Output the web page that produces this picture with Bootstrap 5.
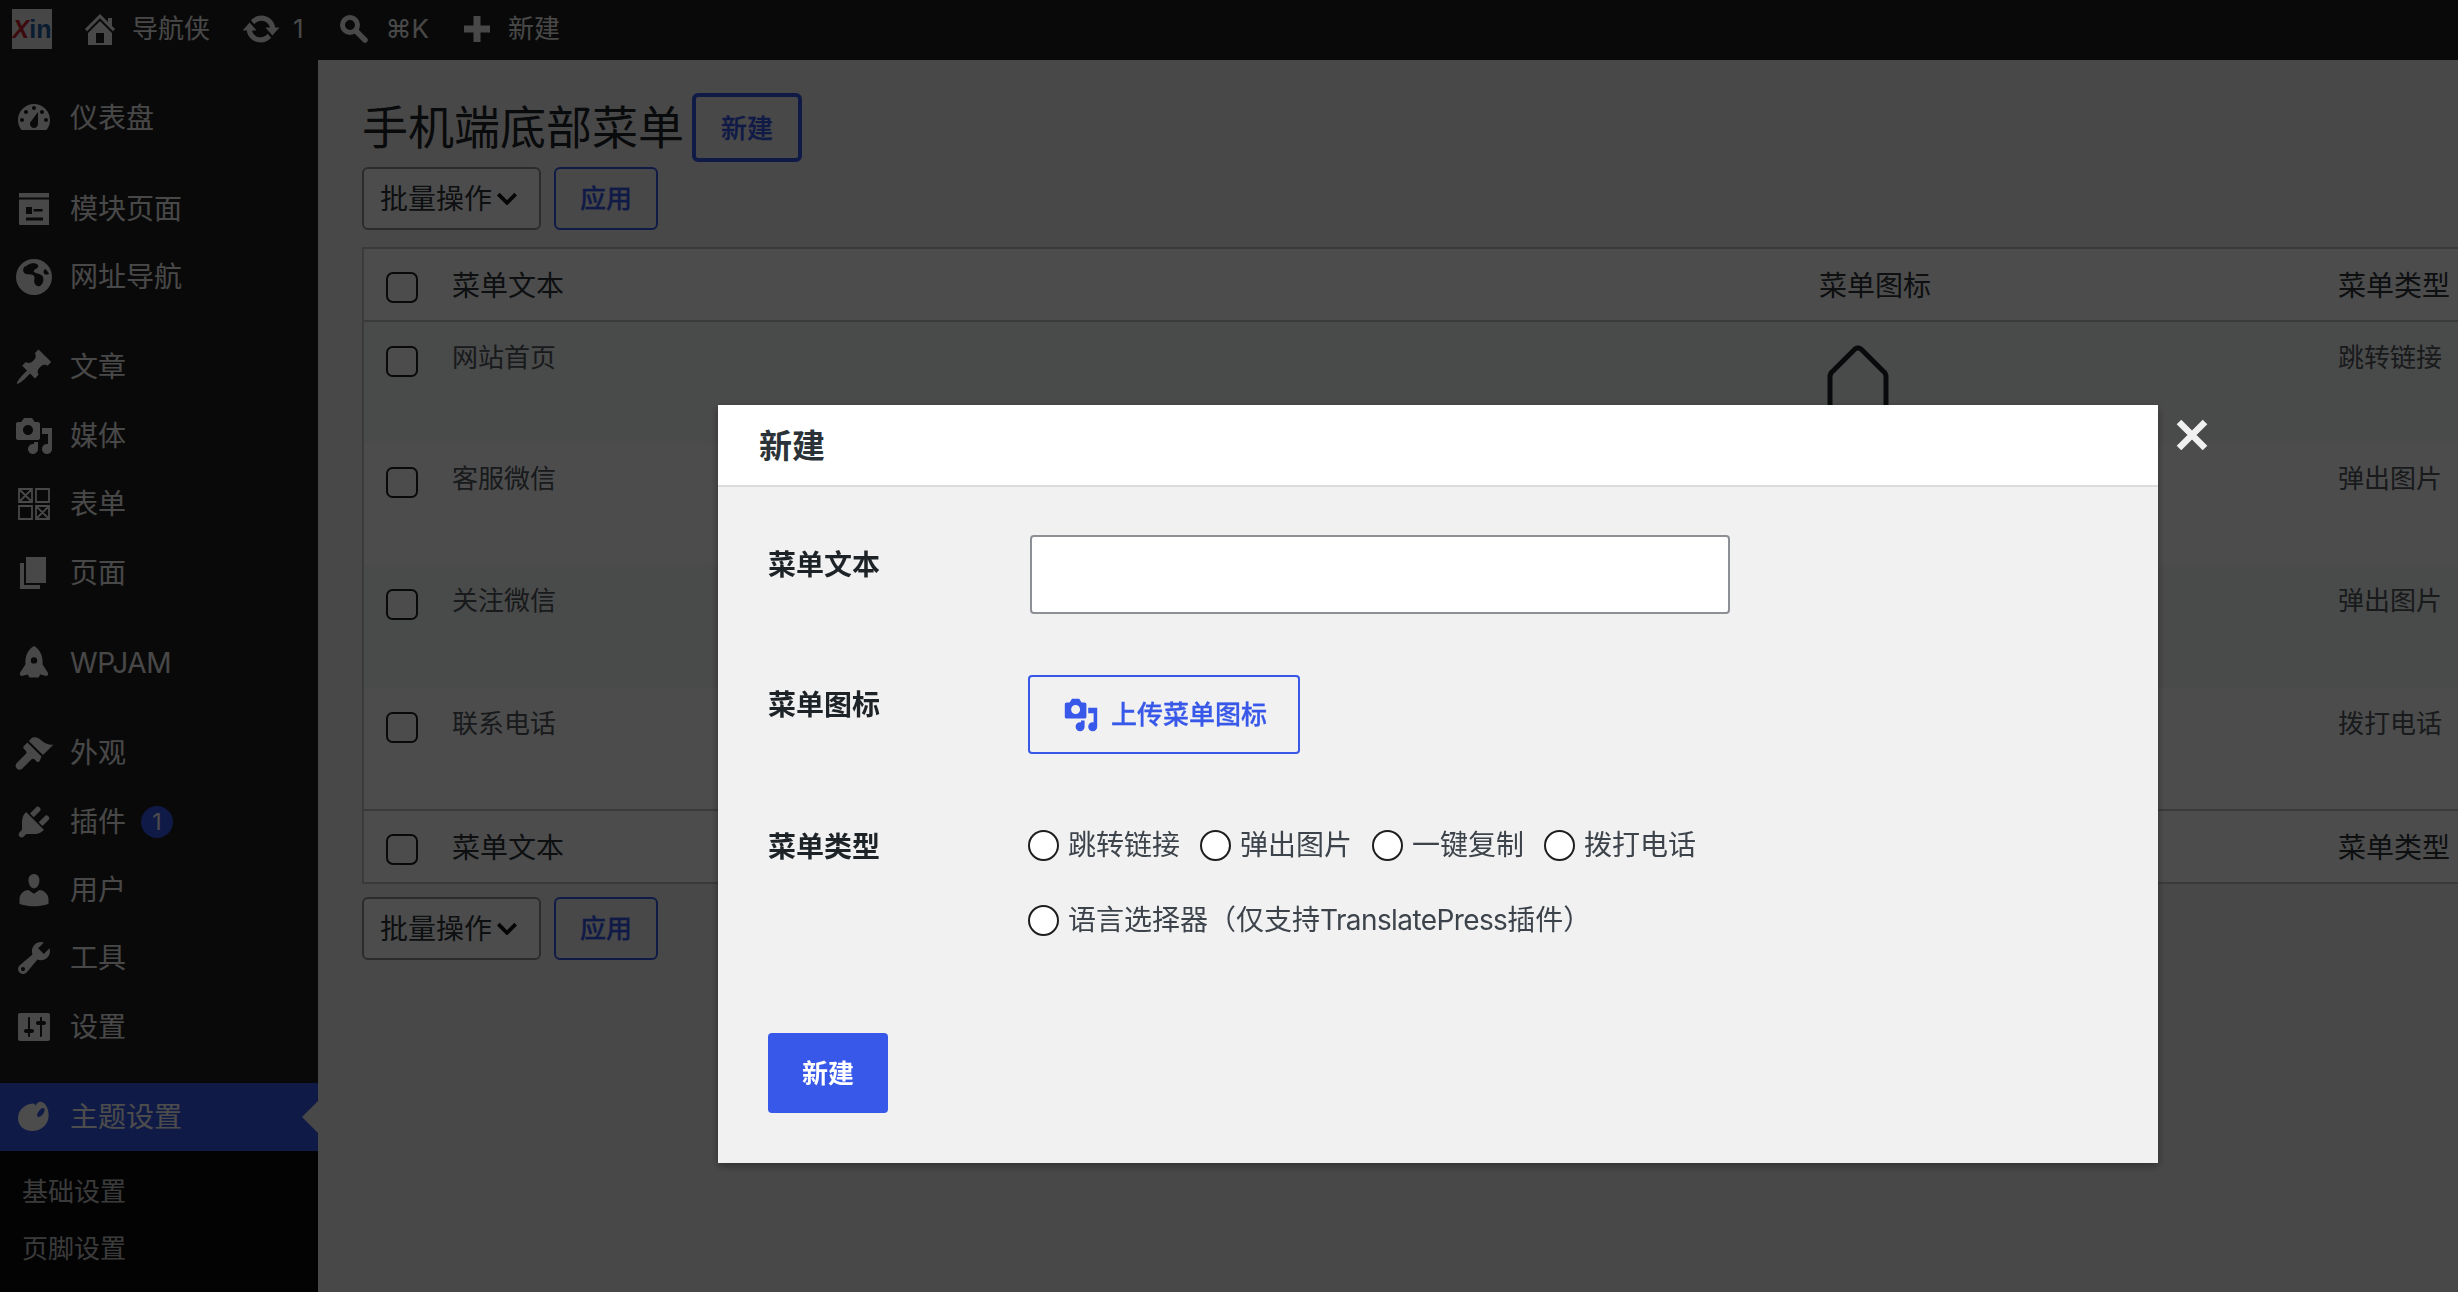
<!DOCTYPE html>
<html lang="zh-CN">
<head>
    <meta charset="UTF-8">
    <title>手机端底部菜单</title>
    <link href="https://cdn.jsdelivr.net/npm/bootstrap@5.3.0/dist/css/bootstrap.min.css" rel="stylesheet">
    <style>
        html, body { height: 100%; overflow: hidden; }
        body {
            font-family: Inter, "Noto Sans CJK SC", "DejaVu Sans", sans-serif;
            font-size: 26px;
            color: #2c3338;
            background: #f0f0f1;
        }
        svg.dash { fill: currentColor; fill-rule: evenodd; flex: none; }

        /* top bar */
        .admin-bar { height: 60px; flex: none; padding-bottom: 3px; background: #1e1e1e; color: #f0f0f1; white-space: nowrap; }
        .xin-logo {
            width: 40px; height: 40px; margin-left: 12px; background: #ececec;
            font: bold 25px/40px "Liberation Sans", sans-serif; text-align: center; color: #1f5fa6;
        }
        .xin-logo span { color: #c8202c; font-style: italic; }
        .bar-home { margin-left: 28px; }
        .bar-label-home { margin-left: 12px; }
        .bar-sync { margin-left: 31px; }
        .bar-count { margin-left: 12px; }
        .bar-search { margin-left: 35px; }
        .bar-key { margin-left: 17px; }
        .bar-plus { margin-left: 35px; }
        .bar-label-new { margin-left: 18px; }

        /* side menu */
        .side-menu { width: 318px; flex: none; background: #1e1e1e; color: #f0f0f1; padding-top: 24px; }
        .side-item { height: 68.4px; padding-left: 14px; font-size: 28px; position: relative; }
        .side-item svg { margin-right: 16px; }
        .side-latin { letter-spacing: -.3px; }
        .side-gap { height: 22px; }
        .side-item.current { background: #3858e9; color: #fff; }
        .side-item.current::after {
            content: ""; position: absolute; right: 0; top: 18px;
            border: 16px solid transparent; border-right-color: #f0f0f1; border-left-width: 0;
        }
        .side-badge {
            width: 32px; height: 32px; margin-left: 15px; border-radius: 50%;
            background: #3858e9; color: #fff; font-size: 23px; line-height: 32px; text-align: center;
        }
        .side-sub { background: #0c0c0c; padding-top: 13px; height: 400px; }
        .side-sub div { height: 56.5px; line-height: 56.5px; padding-left: 22px; font-size: 26px; color: #c3c4c7; }

        /* main list */
        .list-area { padding: 33px 0 0 44px; min-width: 0; overflow: hidden; }
        .list-title { font-size: 46px; font-weight: 400; line-height: 69px; margin: 0; color: #1d2327; }
        .title-new {
            width: 110px; height: 69px; margin-left: 8px; padding: 2px 0 0;
            border: 4px solid #3858e9; border-radius: 6px; color: #3858e9;
            font-size: 26px; font-weight: 500; -webkit-text-stroke: .3px currentColor;
        }
        .bulk-top { margin-top: 5px; }
        .bulk-select {
            width: 179px; height: 63px; padding: 0 0 0 16px; font-size: 28px; color: #2c3338;
            border: 2px solid #8c8f94; border-radius: 6px; background-color: #fff;
            background-image: url("data:image/svg+xml,%3csvg xmlns='http://www.w3.org/2000/svg' viewBox='0 0 20 12'%3e%3cpath fill='none' stroke='%23111' stroke-width='3.5' d='M2 2l8 8 8-8'/%3e%3c/svg%3e");
            background-position: right 21px center; background-size: 22px 13px;
        }
        .bulk-apply {
            width: 104px; height: 63px; margin-left: 13px; padding: 0;
            border: 2px solid #3858e9; border-radius: 6px; color: #3858e9;
            font-size: 26px; font-weight: 500; -webkit-text-stroke: .3px currentColor;
        }
        .menu-table {
            table-layout: fixed; width: 2300px; margin: 17px 0 13px; font-size: 26px;
            border: 2px solid #c3c4c7; --bs-table-bg: #fff; --bs-table-color: #50575e;
        }
        .menu-table th, .menu-table td { padding: 16px 0 0 20px; border: 0; }
        .menu-table thead th, .menu-table tfoot th {
            font-size: 28px; font-weight: 400; color: #2c3338; padding-top: 2px; vertical-align: middle;
        }
        .menu-table thead th { height: 73px; border-bottom: 2px solid #c3c4c7; }
        .menu-table tfoot th { height: 73.5px; border-top: 2px solid #c3c4c7; }
        .menu-table tbody td { height: 122.2px; vertical-align: top; }
        .menu-table tbody tr.stripe td { background: #f6f7f7; }
        .col-check { width: 69px; }
        .col-text { width: 1367px; }
        .col-icon { width: 519px; }
        .menu-check {
            width: 32px; height: 31px; margin: 4px 0 0 2px; float: none; display: block;
            border: 2px solid #1e1e1e; border-radius: 4px; background-color: #fff;
        }
        .menu-table tbody .menu-check { margin-top: 8px; }
        .home-glyph { display: block; margin: 6px 0 0 8px; color: #1d2327; }

        /* dialog */
        .modal-backdrop { --bs-backdrop-opacity: .7; }
        .add-dialog { max-width: none; width: 1440px; margin: 405px 0 0 718px; }
        .add-dialog .modal-content {
            border: 0; border-radius: 0; background: #f1f1f2; box-shadow: 0 3px 8px rgba(0,0,0,.35);
        }
        .add-head { height: 82px; background: #fff; border-bottom: 2px solid #dcdcde; border-radius: 0; padding: 3px 0 0 41px; }
        .add-head .modal-title { font-size: 33px; font-weight: 600; color: #2c3338; }
        .add-close {
            position: absolute; left: 1458px; top: 14px; padding: 0; border: 0; background: none; line-height: 0;
        }
        .add-body { padding: 48px 0 50px 50px; }
        .field-row { display: flex; }
        .upload-row { margin-top: 61px; }
        .field-label { width: 260px; flex: none; font-size: 28px; font-weight: 700; color: #1d2327; padding-top: 9px; line-height: 42px; }
        .text-field {
            width: 700px; height: 79px; margin-left: 2px; border: 2px solid #8c8f94; border-radius: 4px; background: #fff;
        }
        .upload-btn {
            width: 272px; height: 79px; padding: 0 0 0 33px; border: 2px solid #3858e9; border-radius: 4px;
            color: #3858e9; font-size: 26px; font-weight: 500; gap: 12px; -webkit-text-stroke: .3px currentColor;
        }
        .type-row { margin-top: 70px; }
        .type-row .field-label { padding-top: 2px; }
        .type-options { width: 700px; column-gap: 20px; row-gap: 33px; font-size: 28px; line-height: 42px; color: #3c434a; }
        .type-latin { letter-spacing: -.6px; }
        .type-radio {
            width: 31px; height: 31px; margin: 0 9px 0 0; float: none; flex: none;
            border: 2px solid #1e1e1e; background-color: #fff;
        }
        .add-submit {
            width: 120px; height: 80px; margin-top: 92px; padding: 0; border: 0; border-radius: 4px;
            background: #3858e9; color: #fff; font-size: 26px; font-weight: 700;
        }
    </style>
</head>
<body>
    <div class="d-flex flex-column h-100">
        <header class="admin-bar d-flex align-items-center">
            <div class="xin-logo"><span>X</span>in</div>
            <svg class="dash bar-home" width="40" height="40" viewBox="0 0 20 20"><path d="M16 8.5l1.53 1.53-1.06 1.06L10 4.62l-6.47 6.47-1.06-1.06L10 2.5l4 4v-2h2v4zm-6-2.46l6 5.99V18H4v-5.97zM12 17v-5H8v5h4z"/></svg>
            <span class="bar-label-home">导航侠</span>
            <svg class="dash bar-sync" width="40" height="40" viewBox="0 0 20 20"><path d="M10.2 3.28c3.53 0 6.43 2.61 6.92 6h2.08l-3.5 4-3.5-4h2.32c-.45-1.97-2.21-3.45-4.32-3.45-1.45 0-2.73.71-3.54 1.78L4.95 5.66C6.23 4.2 8.11 3.28 10.2 3.28zm-.4 13.44c-3.52 0-6.43-2.61-6.92-6H.8l3.5-4c1.17 1.33 2.33 2.67 3.5 4H5.48c.45 1.97 2.21 3.45 4.32 3.45 1.45 0 2.73-.71 3.54-1.78l1.71 1.95c-1.28 1.46-3.15 2.38-5.25 2.38z"/></svg>
            <span class="bar-count">1</span>
            <svg class="bar-search" width="30" height="30" viewBox="0 0 30 30" fill="none" stroke="currentColor"><circle cx="11" cy="11" r="7.5" stroke-width="5"/><path d="M17 17l9 9" stroke-width="5.5" stroke-linecap="round"/></svg>
            <span class="bar-key">⌘K</span>
            <svg class="dash bar-plus" width="26" height="26" viewBox="0 0 26 26"><path d="M9.500 0h7v9.500H26v7h-9.500V26h-7v-9.500H0v-7h9.500z"/></svg>
            <span class="bar-label-new">新建</span>
        </header>

        <div class="d-flex flex-grow-1 overflow-hidden">
            <nav class="side-menu">
                <div class="side-item d-flex align-items-center"><svg class="dash" width="40" height="40" viewBox="0 0 20 20"><path d="M3.76 16h12.48c1.1-1.37 1.76-3.11 1.76-5 0-4.42-3.58-8-8-8s-8 3.58-8 8c0 1.89.66 3.63 1.76 5zM10 4c.55 0 1 .45 1 1s-.45 1-1 1-1-.45-1-1 .45-1 1-1zM6 6c.55 0 1 .45 1 1s-.45 1-1 1-1-.45-1-1 .45-1 1-1zm8 0c.55 0 1 .45 1 1s-.45 1-1 1-1-.45-1-1 .45-1 1-1zM4 10c.55 0 1 .45 1 1s-.45 1-1 1-1-.45-1-1 .45-1 1-1zm12 0c.55 0 1 .45 1 1s-.45 1-1 1-1-.45-1-1 .45-1 1-1zM8.630 11.550L12 7v6c0 1.100-.9 2-2 2s-2-.9-2-2c0-.57.24-1.080.63-1.450z"/></svg>仪表盘</div>
                <div class="side-gap"></div>
                <div class="side-item d-flex align-items-center"><svg class="dash" width="40" height="40" viewBox="0 0 20 20"><path d="M2.500 2h15v2.200h-15zM3 5.200h14.500V18H3a.5.5 0 0 1-.5-.5V5.200zM6 9v3.500h3V9zm3.800 1v1.200h4.500V10zM6 14.300v1.400h8.500v-1.400z"/></svg>模块页面</div>
                <div class="side-item d-flex align-items-center"><svg class="dash" width="40" height="40" viewBox="0 0 20 20"><path d="M10 1a9 9 0 1 1 0 18 9 9 0 0 1 0-18zM5.500 4.500C4 6 4.500 8 6 8.500c1.500.4 3-.2 4 1 .8 1-.5 2.500.5 4 .5.800 1.700 1.500 2.500 1 1.500-1 2-3 1.500-4.500-.5-1.300-2.500-1.500-4-2.200-1-.5-.6-1.300.3-1.800 1-.5 1.700-1.200 1.200-2-.6-1-2.500-1-3.500-.8-1 .2-2 .8-3 1.800zM15.500 6c-.8.5-1 1.800-.3 2.500.5.400 1.800.3 2.300 0-.3-1-1-2-2-2.500z"/></svg>网址导航</div>
                <div class="side-gap"></div>
                <div class="side-item d-flex align-items-center"><svg class="dash" width="40" height="40" viewBox="0 0 20 20"><path d="M10.440 3.020l1.820-1.820 6.360 6.350-1.830 1.820c-1.050-.68-2.480-.57-3.410.36l-.75.75c-.92.93-1.040 2.350-.35 3.410l-1.830 1.820-2.410-2.410-2.800 2.790c-.42.42-3.380 2.710-3.800 2.290s1.860-3.390 2.280-3.810l2.790-2.790L4.100 9.360l1.830-1.820c1.050.69 2.480.57 3.400-.36l.75-.75c.93-.92 1.050-2.350.36-3.410z"/></svg>文章</div>
                <div class="side-item d-flex align-items-center"><svg class="dash" width="40" height="40" viewBox="0 0 20 20"><path d="M13 11V4c0-.55-.45-1-1-1h-1.670L9 1H5L3.670 3H2c-.55 0-1 .45-1 1v7c0 .55.45 1 1 1h10c.55 0 1-.45 1-1zM7 4.500c1.380 0 2.500 1.120 2.500 2.500S8.380 9.500 7 9.500 4.500 8.380 4.500 7 5.620 4.500 7 4.500zM14 6h5v10.500c0 1.380-1.120 2.500-2.500 2.500S14 17.880 14 16.500s1.120-2.500 2.500-2.500c.17 0 .34.02.5.05V9h-3V6zm-4 8.050V13h2v3.500c0 1.380-1.120 2.500-2.500 2.500S7 17.880 7 16.500 8.120 14 9.500 14c.17 0 .34.02.5.05z"/></svg>媒体</div>
                <div class="side-item d-flex align-items-center"><svg width="40" height="40" viewBox="0 0 20 20" fill="none" stroke="currentColor" stroke-width=".9"><path d="M2.500 2.500h6.500V9H2.500zM2.500 2.500L9 9M9 2.500L2.500 9M11 2.500h6.500V9H11zM2.500 11H9v6.500H2.500zM11 11h6.500v6.500H11zM11 11l6.500 6.500M17.500 11L11 17.500"/></svg>表单</div>
                <div class="side-item d-flex align-items-center"><svg class="dash" width="40" height="40" viewBox="0 0 20 20"><path d="M6 15V2h10v13H6zm-1 1h8v2H3V5h2v11z"/></svg>页面</div>
                <div class="side-gap"></div>
                <div class="side-item d-flex align-items-center"><svg class="dash" width="40" height="40" viewBox="0 0 20 20"><path d="M10 1.500c2.700 1.500 4.300 4.500 4.300 7.800v1.500l2.600 4c.5.8.1 1.700-.8 1.700l-3-.7-.8 1.500H7.700l-.8-1.500-3 .7c-.9 0-1.300-.9-.8-1.700l2.600-4V9.300c0-3.300 1.600-6.300 4.300-7.800zM10 7.100a1.600 1.600 0 1 0 0 3.200 1.600 1.600 0 0 0 0-3.200z"/></svg><span class="side-latin">WPJAM</span></div>
                <div class="side-gap"></div>
                <div class="side-item d-flex align-items-center"><svg class="dash" width="40" height="40" viewBox="0 0 20 20"><path d="M14.480 11.060L7.410 3.990l1.500-1.500c.5-.56 2.300-.47 3.510.32 1.210.8 1.430 1.280 2.910 2.100 1.180.64 2.450 1.260 4.450.85zm-.71.71L6.700 4.700 4.930 6.470c-.39.39-.39 1.020 0 1.410l1.060 1.060c.39.39.39 1.030 0 1.420l-4.600 4.600c-.8.8-.8 2 0 2.800s2 .8 2.800 0l4.600-4.600c.39-.39 1.030-.39 1.420 0l1.060 1.060c.39.39 1.020.39 1.410 0z"/></svg>外观</div>
                <div class="side-item d-flex align-items-center"><svg class="dash" width="40" height="40" viewBox="0 0 20 20"><path d="M13.110 4.360L9.870 7.600 8 5.730l3.240-3.240c.35-.34 1.050-.2 1.560.32.52.51.66 1.210.31 1.550zm-8 1.770l.91-1.120 9.010 9.010-1.190.84c-.71.71-2.630 1.160-3.820 1.160H6.140L4.900 17.260c-.59.59-1.540.59-2.120 0-.59-.58-.59-1.530 0-2.120l1.240-1.240v-3.880c0-1.130.4-3.190 1.090-3.890zm7.260 3.970l3.240-3.240c.34-.35 1.040-.21 1.550.31.52.51.66 1.210.31 1.550l-3.240 3.250z"/></svg>插件<span class="side-badge">1</span></div>
                <div class="side-item d-flex align-items-center"><svg class="dash" width="40" height="40" viewBox="0 0 20 20"><path d="M10 9.250c-2.270 0-2.730-3.440-2.730-3.440C7 4.020 7.820 2 9.970 2c2.160 0 2.980 2.020 2.710 3.810 0 0-.41 3.440-2.680 3.440zm0 2.570L12.720 10c2.390 0 4.520 2.330 4.520 4.530v2.490s-3.650 1.130-7.240 1.130c-3.650 0-7.240-1.130-7.240-1.130v-2.490c0-2.250 1.940-4.480 4.470-4.480z"/></svg>用户</div>
                <div class="side-item d-flex align-items-center"><svg class="dash" width="40" height="40" viewBox="0 0 20 20"><path d="M16.680 9.770c-1.340 1.340-3.300 1.670-4.950.99l-5.410 6.520c-.99.99-2.590.99-3.580 0s-.99-2.590 0-3.570l6.520-5.420c-.68-1.650-.35-3.610.99-4.950 1.280-1.280 3.120-1.620 4.720-1.060l-2.890 2.890 2.820 2.820 2.860-2.870c.53 1.580.18 3.390-1.080 4.670zM3.810 16.210c.4.39 1.040.39 1.430 0 .4-.4.4-1.040 0-1.430-.39-.4-1.030-.4-1.430 0-.39.39-.39 1.030 0 1.430z"/></svg>工具</div>
                <div class="side-item d-flex align-items-center"><svg class="dash" width="40" height="40" viewBox="0 0 20 20"><path d="M18 16V4c0-.55-.45-1-1-1H3c-.55 0-1 .45-1 1v12c0 .55.45 1 1 1h14c.55 0 1-.45 1-1zM8 11h1c.55 0 1 .45 1 1s-.45 1-1 1H8v1.500c0 .28-.22.5-.5.5s-.5-.22-.5-.5V13H6c-.55 0-1-.45-1-1s.45-1 1-1h1V5.500c0-.28.22-.5.5-.5s.5.22.5.5V11zm5-2h-1c-.55 0-1-.45-1-1s.45-1 1-1h1V5.500c0-.28.22-.5.5-.5s.5.22.5.5V7h1c.55 0 1 .45 1 1s-.45 1-1 1h-1v5.500c0 .28-.22.5-.5.5s-.5-.22-.5-.5V9z"/></svg>设置</div>
                <div class="side-gap"></div>
                <div class="side-item current d-flex align-items-center"><svg class="dash" width="40" height="40" viewBox="0 0 20 20"><path d="M9.500 3.200C5.500 3.400 2 6.500 2 10.500 2 14.500 5.200 17 9 17c4.500 0 8.300-3.300 8.300-7.800 0-1.500-.2-3.300-1.300-5-.9-1.400-2.400-2-3.400-1.700-.8.200-1.200 1-1.700 1.600-.4.500-.3-.9-1.400-.9zM14.800 5.500c.6.300.7 1.200.2 2.200-.5 1-1.600 2.200-2.600 2.300-.8.100-1-.7-.7-1.600.5-1.300 2-3.300 3.100-2.900z"/></svg>主题设置</div>
                <div class="side-sub">
                    <div>基础设置</div>
                    <div>页脚设置</div>
                </div>
            </nav>

            <main class="list-area flex-grow-1">
                <div class="d-flex align-items-center">
                    <h1 class="list-title">手机端底部菜单</h1>
                    <button class="btn title-new" type="button">新建</button>
                </div>
                <div class="d-flex bulk-top">
                    <select class="form-select bulk-select"><option>批量操作</option></select>
                    <button class="btn bulk-apply" type="button">应用</button>
                </div>
                <table class="table menu-table">
                    <colgroup><col class="col-check"><col class="col-text"><col class="col-icon"><col></colgroup>
                    <thead>
                        <tr>
                            <th><input class="form-check-input menu-check" type="checkbox"></th>
                            <th>菜单文本</th>
                            <th>菜单图标</th>
                            <th>菜单类型</th>
                        </tr>
                    </thead>
                    <tbody>
                        <tr class="stripe">
                            <td><input class="form-check-input menu-check" type="checkbox"></td>
                            <td>网站首页</td>
                            <td><svg class="home-glyph" width="62" height="70" viewBox="0 0 62 70" fill="none" stroke="currentColor" stroke-width="5" stroke-linejoin="round"><path d="M3 33q0-4 3-6L28 5q3-2 6 0l22 22q3 2 3 6v27a6 6 0 0 1-6 6H9a6 6 0 0 1-6-6z"/></svg></td>
                            <td>跳转链接</td>
                        </tr>
                        <tr>
                            <td><input class="form-check-input menu-check" type="checkbox"></td>
                            <td>客服微信</td>
                            <td></td>
                            <td>弹出图片</td>
                        </tr>
                        <tr class="stripe">
                            <td><input class="form-check-input menu-check" type="checkbox"></td>
                            <td>关注微信</td>
                            <td></td>
                            <td>弹出图片</td>
                        </tr>
                        <tr>
                            <td><input class="form-check-input menu-check" type="checkbox"></td>
                            <td>联系电话</td>
                            <td></td>
                            <td>拨打电话</td>
                        </tr>
                    </tbody>
                    <tfoot>
                        <tr>
                            <th><input class="form-check-input menu-check" type="checkbox"></th>
                            <th>菜单文本</th>
                            <th>菜单图标</th>
                            <th>菜单类型</th>
                        </tr>
                    </tfoot>
                </table>
                <div class="d-flex">
                    <select class="form-select bulk-select"><option>批量操作</option></select>
                    <button class="btn bulk-apply" type="button">应用</button>
                </div>
            </main>
        </div>
    </div>

    <div class="modal-backdrop show"></div>
    <div class="modal d-block" tabindex="-1">
        <div class="modal-dialog add-dialog">
            <div class="modal-content">
                <button class="add-close" type="button" aria-label="关闭">
                    <svg width="32" height="32" viewBox="0 0 32 32" fill="none" stroke="#f0f0f1" stroke-width="6.500"><path d="M3 3l26 26M29 3L3 29"/></svg>
                </button>
                <div class="modal-header add-head">
                    <h5 class="modal-title">新建</h5>
                </div>
                <form class="modal-body add-body">
                    <div class="field-row">
                        <label class="field-label">菜单文本</label>
                        <input class="form-control text-field" type="text">
                    </div>
                    <div class="field-row upload-row">
                        <label class="field-label">菜单图标</label>
                        <button class="btn upload-btn d-flex align-items-center" type="button">
                            <svg class="dash" width="36" height="36" viewBox="0 0 20 20"><path d="M13 11V4c0-.55-.45-1-1-1h-1.670L9 1H5L3.670 3H2c-.55 0-1 .45-1 1v7c0 .55.45 1 1 1h10c.55 0 1-.45 1-1zM7 4.500c1.380 0 2.500 1.120 2.500 2.500S8.380 9.500 7 9.500 4.500 8.380 4.500 7 5.620 4.500 7 4.500zM14 6h5v10.500c0 1.380-1.120 2.500-2.500 2.500S14 17.880 14 16.500s1.120-2.500 2.500-2.500c.17 0 .34.02.5.05V9h-3V6zm-4 8.050V13h2v3.500c0 1.380-1.120 2.500-2.500 2.500S7 17.880 7 16.500 8.120 14 9.500 14c.17 0 .34.02.5.05z"/></svg>
                            <span>上传菜单图标</span>
                        </button>
                    </div>
                    <div class="field-row type-row">
                        <label class="field-label">菜单类型</label>
                        <div class="type-options d-flex flex-wrap">
                            <label class="d-flex align-items-center"><input class="form-check-input type-radio" type="radio" name="menu_type">跳转链接</label>
                            <label class="d-flex align-items-center"><input class="form-check-input type-radio" type="radio" name="menu_type">弹出图片</label>
                            <label class="d-flex align-items-center"><input class="form-check-input type-radio" type="radio" name="menu_type">一键复制</label>
                            <label class="d-flex align-items-center"><input class="form-check-input type-radio" type="radio" name="menu_type">拨打电话</label>
                            <label class="d-flex align-items-center"><input class="form-check-input type-radio" type="radio" name="menu_type"><span>语言选择器（仅支持<span class="type-latin">TranslatePress</span>插件）</span></label>
                        </div>
                    </div>
                    <button class="btn add-submit" type="button">新建</button>
                </form>
            </div>
        </div>
    </div>
    <script src="https://cdn.jsdelivr.net/npm/bootstrap@5.3.0/dist/js/bootstrap.bundle.min.js"></script>
</body>
</html>
